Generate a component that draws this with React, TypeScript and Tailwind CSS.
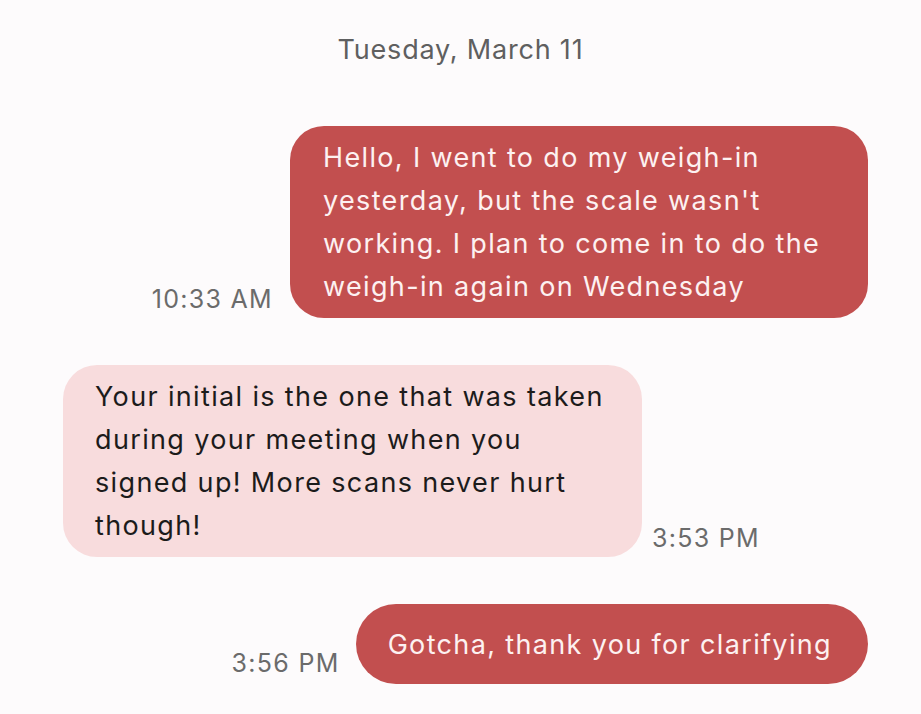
import React from "react";

const font = { fontFamily: "Inter, Roboto, 'Noto Sans', sans-serif" };

export default function App() {
  return (
    <div
      className="w-full h-[714px] bg-[#fdfbfc] flex flex-col overflow-hidden"
      style={font}
    >
      <div className="pt-[32px] text-center text-[27px] leading-[36px] tracking-[0.8px] text-[#5f5f60]">
        Tuesday, March 11
      </div>

      <div className="mt-[58px] flex justify-end items-end pr-[53px]">
        <div className="mb-[4px] mr-[17px] text-[25px] leading-[30px] tracking-[1.3px] text-[#6b6b6b]">
          10:33 AM
        </div>
        <div className="w-[578px] rounded-[34px] bg-[#c24f4f] px-[33px] py-[10px] text-[27px] leading-[43px] tracking-[1.35px] text-[#fdf1f1]">
          Hello, I went to do my weigh-in
          <br />
          yesterday, but the scale wasn't
          <br />
          working. I plan to come in to do the
          <br />
          weigh-in again on Wednesday
        </div>
      </div>

      <div className="mt-[47px] flex justify-start items-end pl-[63px]">
        <div className="w-[579px] rounded-[34px] bg-[#f8dcdd] px-[32px] py-[10px] text-[27px] leading-[43px] tracking-[1.35px] text-[#1c1b1b]">
          Your initial is the one that was taken
          <br />
          during your meeting when you
          <br />
          signed up! More scans never hurt
          <br />
          though!
        </div>
        <div className="mb-[4px] ml-[10px] text-[25px] leading-[30px] tracking-[1.3px] text-[#6b6b6b]">
          3:53 PM
        </div>
      </div>

      <div className="mt-[47px] flex justify-end items-end pr-[53px]">
        <div className="mb-[6px] mr-[16px] text-[25px] leading-[30px] tracking-[1.3px] text-[#6b6b6b]">
          3:56 PM
        </div>
        <div className="h-[80px] flex items-center rounded-full bg-[#c24f4f] pl-[32px] pr-[36px] text-[27px] leading-[43px] tracking-[1.35px] text-[#fdf1f1]">
          Gotcha, thank you for clarifying
        </div>
      </div>
    </div>
  );
}
